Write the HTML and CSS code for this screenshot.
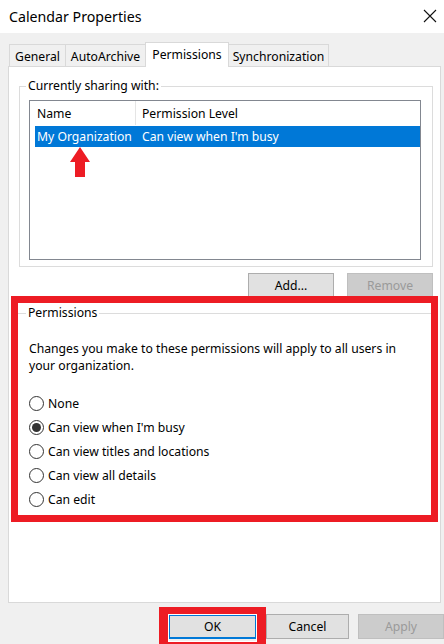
FILE: index.html
```html
<!DOCTYPE html>
<html lang="en">
<head>
<meta charset="utf-8">
<title>Calendar Properties</title>
<link rel="stylesheet" href="styles.css">
</head>
<body>
<div class="window">
  <header class="titlebar">
    <span class="title">Calendar Properties</span>
    <svg class="close" width="14" height="14" viewBox="0 0 14 14" aria-hidden="true">
      <path d="M1 1 L13 13 M13 1 L1 13" stroke="#111" stroke-width="1.1" fill="none"/>
    </svg>
  </header>
  <div class="dialog">
    <div class="tabs">
      <div class="tab tab-general">General</div>
      <div class="tab tab-archive">AutoArchive</div>
      <div class="tab tab-perms active">Permissions</div>
      <div class="tab tab-sync">Synchronization</div>
    </div>
    <div class="panel">
      <fieldset class="group sharing">
        <legend>Currently sharing with:</legend>
        <div class="listview">
          <div class="lv-header">
            <span class="hcol hcol-name">Name</span>
            <span class="hcol hcol-level">Permission Level</span>
          </div>
          <div class="lv-row selected">
            <span class="rcol rcol-name">My Organization</span>
            <span class="rcol rcol-level">Can view when I'm busy</span>
          </div>
          <svg class="arrow" width="20" height="30" viewBox="0 0 20 30" aria-hidden="true">
            <polygon points="10,0 20,15 15,15 15,30 5,30 5,15 0,15" fill="#ed1c24"/>
          </svg>
        </div>
      </fieldset>
      <div class="btn-row">
        <button class="btn">Add...</button>
        <button class="btn disabled">Remove</button>
      </div>
      <div class="highlight">
        <fieldset class="group perms">
          <legend>Permissions</legend>
          <p class="note">Changes you make to these permissions will apply to all users in your organization.</p>
          <div class="radios">
            <label class="radio"><span class="dot"></span>None</label>
            <label class="radio checked"><span class="dot"></span>Can view when I'm busy</label>
            <label class="radio"><span class="dot"></span>Can view titles and locations</label>
            <label class="radio"><span class="dot"></span>Can view all details</label>
            <label class="radio"><span class="dot"></span>Can edit</label>
          </div>
        </fieldset>
      </div>
    </div>
    <div class="footer">
      <button class="btn btn-ok default">OK</button>
      <button class="btn btn-cancel">Cancel</button>
      <button class="btn btn-apply disabled">Apply</button>
    </div>
  </div>
</div>
</body>
</html>
```
FILE: styles.css
```css
* { box-sizing: border-box; }
html, body { margin: 0; padding: 0; }
body {
  width: 444px;
  height: 644px;
  overflow: hidden;
  font-family: "Noto Sans", "Open Sans", sans-serif;
  font-size: 12.2px;
  color: #000;
  background: #f0f0f0;
}
.window { width: 444px; height: 644px; display: flex; flex-direction: column; }

.titlebar {
  height: 33px;
  background: #fff;
  display: flex;
  align-items: center;
  justify-content: space-between;
  padding: 0 7px 1px 9px;
}
.title { font-size: 14.2px; }
.close { display: block; }

.dialog { flex: 1; padding: 9px 0 0 8px; background: #f0f0f0; }

.tabs { display: flex; align-items: flex-end; height: 24px; padding-left: 1px; position: relative; z-index: 1; }
.tab {
  height: 22px;
  border: 1px solid #d9d9d9;
  border-bottom: none;
  background: #f0f0f0;
  display: flex;
  align-items: center;
  justify-content: center;
  padding-top: 1px;
  margin-left: -1px;
  white-space: nowrap;
}
.tab:first-child { margin-left: 0; }
.tab-general { width: 57px; }
.tab-archive { width: 81px; }
.tab-perms { width: 84px; }
.tab-sync { width: 101px; }
.tab.active {
  height: 25px;
  margin-bottom: -1px;
  background: #fff;
  padding-bottom: 3px;
  position: relative;
}

.panel {
  width: 433px;
  height: 537px;
  background: #fff;
  border: 1px solid #d9d9d9;
  display: flex;
  flex-direction: column;
}

.group { border: 1px solid #dcdcdc; min-width: 0; }
.group legend { padding: 0 2px; margin-left: -3px; line-height: 16px; }

.sharing { margin: 11px 7px 0 10px; padding: 6px 11px 6px 9px; }

.listview {
  position: relative;
  height: 160px;
  border: 1px solid #828790;
  background: #fff;
}
.lv-header { display: flex; height: 24px; align-items: stretch; }
.hcol { display: flex; align-items: center; }
.hcol-name { width: 106px; padding-left: 7px; border-right: 1px solid #e5e5e5; }
.hcol-level { padding-left: 6px; }
.lv-row { display: flex; height: 21px; margin: 1px 0 0 5px; align-items: center; white-space: nowrap; }
.lv-row.selected { background: #0078d7; color: #fff; }
.rcol-name { width: 101px; padding-left: 2px; }
.rcol-level { padding-left: 6px; }
.arrow { position: absolute; left: 40px; top: 46px; display: block; }

.btn {
  font: inherit;
  color: #000;
  width: 86px;
  height: 24px;
  background: #e1e1e1;
  border: 1px solid #adadad;
  padding: 0;
  margin: 0;
}
.btn.disabled { background: #cccccc; border-color: #bfbfbf; color: #9a9a9a; }

.btn-row { display: flex; justify-content: flex-end; gap: 13px; padding-right: 7px; margin-top: 6px; }

.highlight {
  margin: -1px 2px 0 2px;
  height: 226px;
  border: 7px solid #ed1c24;
  position: relative;
}
.perms {
  border: none;
  border-top: 1px solid #dcdcdc;
  margin: 2px 0 0 0;
  padding: 0 0 4px 11px;
}
.note { margin: 19px 0 0 0; line-height: 17px; padding-right: 22px; }
.radios { display: flex; flex-direction: column; margin-top: 17px; }
.radio { display: flex; align-items: center; height: 24px; gap: 4px; }
.dot {
  width: 15px;
  height: 15px;
  border: 1px solid #333;
  border-radius: 50%;
  background: #fff;
  display: flex;
  align-items: center;
  justify-content: center;
}
.radio.checked .dot::after {
  content: "";
  width: 9px;
  height: 9px;
  border-radius: 50%;
  background: #333;
}

.footer { display: flex; justify-content: flex-end; gap: 9px; margin-top: 11px; margin-right: 0; }
.footer .btn { height: 25px; }
.btn-ok { width: 89px; position: relative; }
.btn-cancel { width: 83px; }
.btn-apply { width: 86px; }
.btn.default { border: 2px solid #0078d7; }
.btn.default::after {
  content: "";
  position: absolute;
  top: -9px;
  left: -11px;
  right: -11px;
  bottom: -12px;
  border: solid #ed1c24;
  border-width: 7px 9px;
  box-shadow: inset 0 0 0 1px #fff;
  pointer-events: none;
}
```
